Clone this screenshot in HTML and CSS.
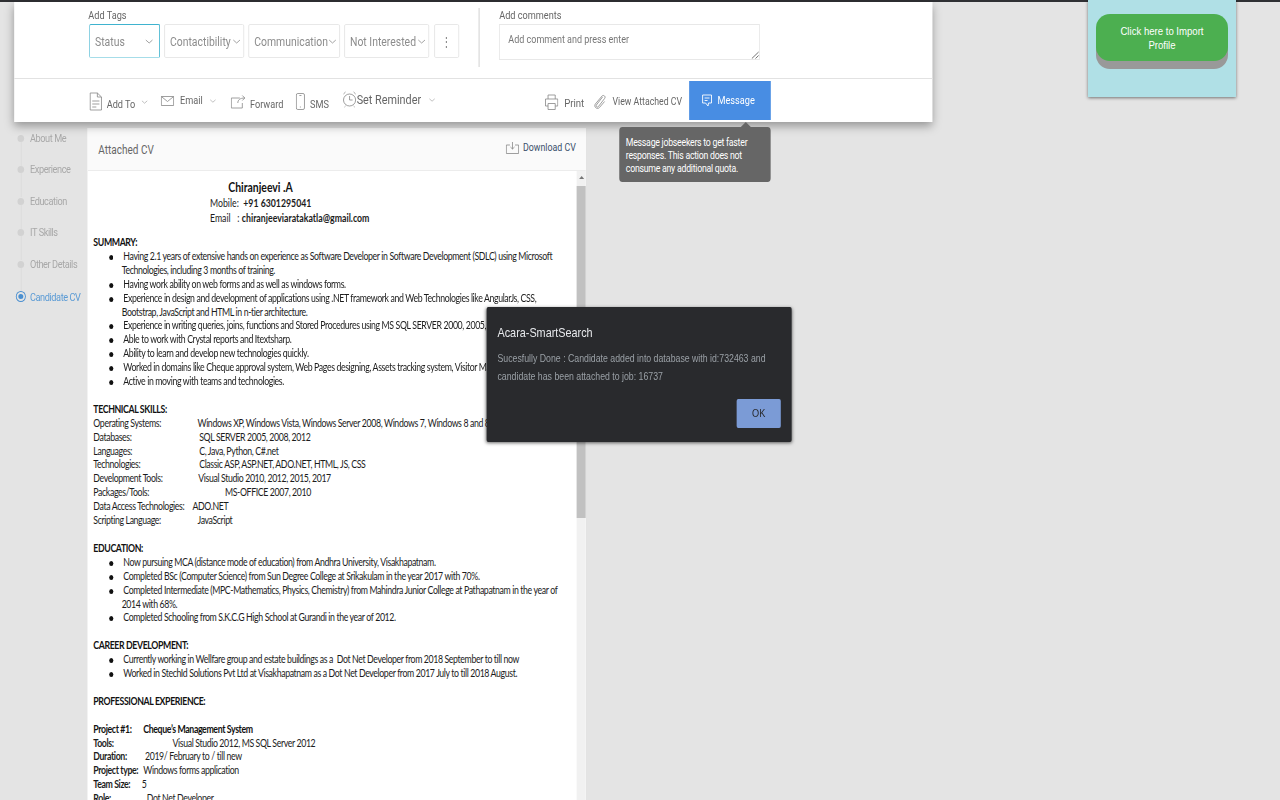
FILE: index.html
```html
<!DOCTYPE html>
<html lang="en">
<head>
    <meta charset="UTF-8">
    <title>Attached CV</title>
    <link rel="stylesheet" href="styles.css">
</head>
<body>
<div class="top-line"></div>

<div class="import-panel">
    <div class="import-btn"><span class="import-label">Click here to Import Profile</span></div>
</div>

<div class="stage">
    <div class="action-card">
        <div class="tags-row">
            <div class="tags-block">
                <div class="field-label tags-label">Add Tags</div>
                <div class="tag-selects">
                    <div class="tag-select status">Status <svg class="chev" viewBox="0 0 10 5"><path d="M1 1l4 3 4-3"/></svg></div>
                    <div class="tag-select contact">Contactibility <svg class="chev" viewBox="0 0 10 5"><path d="M1 1l4 3 4-3"/></svg></div>
                    <div class="tag-select comm">Communication <svg class="chev" viewBox="0 0 10 5"><path d="M1 1l4 3 4-3"/></svg></div>
                    <div class="tag-select notint">Not Interested <svg class="chev" viewBox="0 0 10 5"><path d="M1 1l4 3 4-3"/></svg></div>
                    <div class="tag-select more">&#8942;</div>
                </div>
            </div>
            <div class="comments-block">
                <div class="field-label">Add comments</div>
                <div class="comment-box">Add comment and press enter
                    <svg class="grip" viewBox="0 0 8 8" preserveAspectRatio="none"><path d="M7.500 1L1 7.500M7.500 4.500L4.500 7.500"/></svg>
                </div>
            </div>
        </div>
        <div class="actions-row">
            <div class="actions-left">
                <div class="action add-to">
                    <svg class="ico" width="16" height="20" viewBox="0 0 13 20" preserveAspectRatio="none"><path d="M1 1h7l4 4v13H1zM8 1v4h4M3 9h7M3 12h7M3 15h4"/></svg>
                    <span>Add To</span>
                    <svg class="chev" viewBox="0 0 10 5"><path d="M1 1l4 3 4-3"/></svg>
                </div>
                <div class="action email">
                    <svg class="ico" width="16" height="10" viewBox="0 0 13 10" preserveAspectRatio="none"><path d="M.5.5h12v9H.5zM.5.5l6 5 6-5"/></svg>
                    <span>Email</span>
                    <svg class="chev" viewBox="0 0 10 5"><path d="M1 1l4 3 4-3"/></svg>
                </div>
                <div class="action forward">
                    <svg class="ico" width="18" height="14" viewBox="0 0 15 14" preserveAspectRatio="none"><path d="M9 3H.5v10h11V8M7 8c0-3 2-5 7-5M11.500.5L14 3l-2.500 2.500"/></svg>
                    <span>Forward</span>
                </div>
                <div class="action sms">
                    <svg class="ico" width="11" height="17" viewBox="0 0 9 17" preserveAspectRatio="none"><rect x=".5" y=".5" width="8" height="16" rx="1.500"/><path d="M3.500 2.500h2M4 14h1"/></svg>
                    <span>SMS</span>
                </div>
                <div class="action reminder">
                    <svg class="ico" width="17" height="17" viewBox="0 0 14 17" preserveAspectRatio="none"><circle cx="7" cy="9" r="6"/><path d="M7 5v4h3M1 3l2-2M13 3l-2-2M3 15l-1 1M11 15l1 1"/></svg>
                    <span>Set Reminder</span>
                    <svg class="chev" viewBox="0 0 10 5"><path d="M1 1l4 3 4-3"/></svg>
                </div>
            </div>
            <div class="actions-right">
                <div class="action print">
                    <svg class="ico" width="16" height="16" viewBox="0 0 13 16" preserveAspectRatio="none"><path d="M3 5V1h7v4M3 12H.5V5h12v7H10M3 9.500h7v6H3z"/></svg>
                    <span>Print</span>
                </div>
                <div class="action attach">
                    <svg class="ico" width="16" height="16" viewBox="0 0 13 16" preserveAspectRatio="none"><path d="M9 3L3 11c-1 1.500 1 3 2 1.500l6-8c1.500-2-1-4-2.500-2.500L2 10c-2 3 2 6 4 3.500l5-6"/></svg>
                    <span>View Attached CV</span>
                </div>
                <div class="message-btn">
                    <svg width="13" height="13" viewBox="0 0 11 13" preserveAspectRatio="none"><path d="M1 1h9v8H7l-.5 3L4 9H1zM3 4h5M3 6.500h3"/></svg>
                    <span>Message</span>
                </div>
            </div>
        </div>
    </div>

    <div class="page-body">
        <ul class="side-steps">
            <li class="step">About Me</li>
            <li class="step">Experience</li>
            <li class="step">Education</li>
            <li class="step">IT Skills</li>
            <li class="step">Other Details</li>
            <li class="step current">Candidate CV</li>
        </ul>

        <div class="cv-panel">
            <div class="cv-head">
                <span class="cv-title">Attached CV</span>
                <span class="cv-download">
                    <svg width="16" height="12" viewBox="0 0 13 12" preserveAspectRatio="none"><path d="M4 3H.5v8.500h12V3H9M6.500 0v7M4.500 5l2 2 2-2"/></svg>
                    Download CV
                </span>
            </div>
            <div class="cv-body">
                <div class="cv-doc">
                    <div class="cv-name">Chiranjeevi .A</div>
                    <div class="cv-contact">Mobile:&nbsp; <b>+91 6301295041</b></div>
                    <div class="cv-contact">Email &nbsp; : <b>chiranjeeviaratakatla@gmail.com</b></div>

                    <div class="cv-h first">SUMMARY:</div>
                    <div class="li">Having 2.1 years of extensive hands on experience as Software Developer in Software Development (SDLC) using Microsoft</div>
                    <div class="li-more">Technologies, including 3 months of training.</div>
                    <div class="li">Having work ability on web forms and as well as windows forms.</div>
                    <div class="li">Experience in design and development of applications using .NET framework and Web Technologies like AngularJs, CSS,</div>
                    <div class="li-more">Bootstrap, JavaScript and HTML in n-tier architecture.</div>
                    <div class="li">Experience in writing queries, joins, functions and Stored Procedures using MS SQL SERVER 2000, 2005, 2008.</div>
                    <div class="li">Able to work with Crystal reports and Itextsharp.</div>
                    <div class="li">Ability to learn and develop new technologies quickly.</div>
                    <div class="li">Worked in domains like Cheque approval system, Web Pages designing, Assets tracking system, Visitor Management.</div>
                    <div class="li">Active in moving with teams and technologies.</div>

                    <div class="cv-h">TECHNICAL SKILLS:</div>
                    <div class="kv"><span class="k k125">Operating Systems:</span>Windows XP, Windows Vista, Windows Server 2008, Windows 7, Windows 8 and 8.1</div>
                    <div class="kv"><span class="k k127">Databases:</span>SQL SERVER 2005, 2008, 2012</div>
                    <div class="kv"><span class="k k127">Languages:</span>C, Java, Python, C#.net</div>
                    <div class="kv"><span class="k k127">Technologies:</span>Classic ASP, ASP.NET, ADO.NET, HTML, JS, CSS</div>
                    <div class="kv"><span class="k k126">Development Tools:</span>Visual Studio 2010, 2012, 2015, 2017</div>
                    <div class="kv"><span class="k k158">Packages/Tools:</span>MS-OFFICE 2007, 2010</div>
                    <div class="kv"><span class="k k119">Data Access Technologies:</span>ADO.NET</div>
                    <div class="kv"><span class="k k125">Scripting Language:</span>JavaScript</div>

                    <div class="cv-h">EDUCATION:</div>
                    <div class="li">Now pursuing MCA (distance mode of education) from Andhra University, Visakhapatnam.</div>
                    <div class="li">Completed BSc (Computer Science) from Sun Degree College at Srikakulam in the year 2017 with 70%.</div>
                    <div class="li">Completed Intermediate (MPC-Mathematics, Physics, Chemistry) from Mahindra Junior College at Pathapatnam in the year of</div>
                    <div class="li-more">2014 with 68%.</div>
                    <div class="li">Completed Schooling from S.K.C.G High School at Gurandi in the year of 2012.</div>

                    <div class="cv-h">CAREER DEVELOPMENT:</div>
                    <div class="li">Currently working in Wellfare group and estate buildings as a&nbsp; Dot Net Developer from 2018 September to till now</div>
                    <div class="li">Worked in StechId Solutions Pvt Ltd at Visakhapatnam as a Dot Net Developer from 2017 July to till 2018 August.</div>

                    <div class="cv-h">PROFESSIONAL EXPERIENCE:</div>

                    <div class="cv-h"><span class="k k60">Project #1:</span>Cheque’s Management System</div>
                    <div class="kv"><b class="k k95">Tools:</b>Visual Studio 2012, MS SQL Server 2012</div>
                    <div class="kv"><b class="k k62">Duration:</b>2019/ February to / till new</div>
                    <div class="kv"><b class="k k60">Project type:</b>Windows forms application</div>
                    <div class="kv"><b class="k k58">Team Size:</b>5</div>
                    <div class="kv"><b class="k k64">Role:</b>Dot Net Developer</div>
                </div>
                <div class="cv-scroll">
                    <div class="scroll-up"></div>
                    <div class="scroll-thumb"></div>
                </div>
            </div>
        </div>
    </div>

    <div class="msg-tooltip">Message jobseekers to get faster responses. This action does not consume any additional quota.</div>

    <div class="alert-box">
        <div class="alert-title">Acara-SmartSearch</div>
        <div class="alert-text">Sucesfully Done : Candidate added into database with id:732463 and candidate has been attached to job: 16737</div>
        <div class="alert-foot"><div class="alert-ok">OK</div></div>
    </div>
</div>
</body>
</html>
```

FILE: styles.css
```css
html, body {
    margin: 0;
    padding: 0;
    height: 800px;
    overflow: hidden;
    background: #e4e4e4;
}
body {
    position: relative;
}
.top-line {
    height: 2px;
    background: #2f3033;
}
/* the page was captured squeezed sideways, so x values in here are 1.2x the window's */
.stage {
    position: relative;
    width: 1280px;
    height: 798px;
    transform: scaleX(0.8333);
    transform-origin: 0 0;
    font-family: Roboto, "Liberation Sans", sans-serif;
    font-size: 11px;
    color: #666;
}

/* top card */
.action-card {
    position: relative;
    z-index: 2;
    width: 1102px;
    height: 120px;
    margin-left: 17px;
    background: #fff;
    box-shadow: 0 4px 10px rgba(0, 0, 0, 0.35);
}
.tags-row {
    display: flex;
    height: 76px;
    padding-left: 90px;
    border-bottom: 1px solid #e2e2e2;
}
.tags-block {
    width: 469px;
    height: 59px;
    margin-top: 6px;
    padding-top: 1px;
    box-sizing: border-box;
    border-right: 2px solid #e4e4e4;
}
.field-label {
    font-size: 11px;
    line-height: 14px;
    color: #666;
}
.tags-label {
    margin-left: -1px;
}
.tag-selects {
    display: flex;
    gap: 5px;
    margin-top: 1px;
}
.tag-select {
    display: flex;
    align-items: center;
    justify-content: space-between;
    height: 34px;
    box-sizing: border-box;
    padding: 0 3px 0 6px;
    border: 1px solid #e6e6e6;
    border-radius: 2px;
    font-size: 12.500px;
    color: #8c8c8c;
    white-space: nowrap;
}
.tag-select.status {
    width: 85px;
    padding-right: 7px;
    border-color: #3fb3cf;
    border-bottom-color: #a6dde9;
}
.tag-select.contact { width: 96px; }
.tag-select.comm { width: 110px; }
.tag-select.notint { width: 102px; }
.tag-select.more {
    width: 30px;
    margin-left: 1px;
    justify-content: center;
    padding: 0;
}
.chev {
    flex: none;
    width: 10px;
    height: 5px;
    fill: none;
    stroke: #999;
    stroke-width: 1;
}
.comments-block {
    margin: 7px 0 0 23px;
}
.comment-box {
    position: relative;
    width: 313px;
    height: 36px;
    margin-top: 1px;
    padding: 8px 10px;
    box-sizing: border-box;
    border: 1px solid #e8e8e8;
    font-size: 10.800px;
    color: #777;
}
.grip {
    position: absolute;
    right: 0;
    bottom: 0;
    width: 10px;
    height: 8px;
    fill: none;
    stroke: #555;
    stroke-width: 0.8;
}
.actions-row {
    display: flex;
    justify-content: space-between;
    height: 43px;
    padding: 2px 194px 0 90px;
    box-sizing: border-box;
}
.actions-left,
.actions-right {
    display: flex;
    align-items: stretch;
}
.action {
    display: flex;
    align-items: center;
    white-space: nowrap;
}
.ico {
    flex: none;
    fill: none;
    stroke: #888;
    stroke-width: 0.8;
}
.action .chev {
    width: 9px;
    height: 4px;
    stroke: #aaa;
}
.add-to { width: 86px; }
.add-to span { margin: 6px 7px 0 5px; }
.email { width: 84px; padding-bottom: 2px; box-sizing: border-box; }
.email span { margin: 0 8px 0 7px; }
.forward { width: 78px; }
.forward span { margin: 6px 0 0 5px; }
.sms { width: 56px; }
.sms span { margin: 6px 0 0 6px; }
.reminder { padding-bottom: 4px; box-sizing: border-box; font-size: 13px; }
.reminder span { margin: 0 9px 0 0; }
.print { width: 58px; font-size: 11.500px; }
.print span { margin: 2px 0 0 7px; }
.attach { width: 115px; font-size: 10.500px; }
.attach span { margin-left: 7px; }
.message-btn {
    display: flex;
    align-items: center;
    gap: 6px;
    width: 98px;
    height: 39px;
    padding-left: 15px;
    box-sizing: border-box;
    background: #488de3;
    color: #fff;
    font-size: 11px;
}
.message-btn svg {
    fill: none;
    stroke: #fff;
    stroke-width: 0.9;
}

/* sidebar + cv */
.page-body {
    display: flex;
    align-items: flex-start;
    padding-top: 6px;
}
.side-steps {
    flex: none;
    width: 105px;
    margin: 0;
    padding: 6px 0 0;
    list-style: none;
    font-size: 11px;
    letter-spacing: -0.5px;
    color: #a8a8a8;
}
.step {
    position: relative;
    height: 31.400px;
    padding-left: 36px;
    line-height: 10px;
    white-space: nowrap;
}
.step::before {
    content: "";
    position: absolute;
    left: 21px;
    top: 1px;
    width: 8px;
    height: 7px;
    border-radius: 50%;
    background: #d2d2d2;
}
.step::after {
    content: "";
    position: absolute;
    left: 25px;
    top: 8px;
    width: 1px;
    height: 24px;
    background: #dcdcdc;
}
.step.current {
    color: #5b9bd5;
    line-height: 14px;
}
.step.current::before {
    left: 20px;
    top: 1px;
    width: 6px;
    height: 5px;
    background: #4a8fd0;
    border: 2px solid #e4e4e4;
    box-shadow: 0 0 0 1px #4a8fd0;
}
.step.current::after {
    display: none;
}
.cv-panel {
    flex: none;
    width: 599px;
    height: 672px;
    box-sizing: border-box;
    border-right: 1px solid #d8d8d8;
    background: #fff;
    overflow: hidden;
}
.cv-head {
    display: flex;
    justify-content: space-between;
    align-items: center;
    height: 43px;
    padding: 0 12px 0 13px;
    box-sizing: border-box;
    background: #fafafa;
    border-bottom: 1px solid #ececec;
}
.cv-title {
    margin-top: 1px;
    font-size: 12px;
    color: #666;
}
.cv-download {
    display: flex;
    align-items: center;
    gap: 5px;
    margin-top: -3px;
    font-size: 10.600px;
    color: #3a506b;
}
.cv-download svg {
    fill: none;
    stroke: #888;
    stroke-width: 0.8;
}
.cv-body {
    display: flex;
    height: 629px;
}
.cv-doc {
    flex: 1;
    padding: 9px 0 0 7px;
    overflow: hidden;
    font-family: Lato, "Liberation Sans", sans-serif;
    font-size: 10.500px;
    line-height: 13.900px;
    letter-spacing: -0.45px;
    color: #1c1c1c;
    white-space: nowrap;
}
.cv-name {
    padding-left: 162px;
    font-size: 12.500px;
    font-weight: 700;
    line-height: 16px;
    letter-spacing: 0;
    color: #111;
}
.cv-contact {
    padding-left: 140px;
    font-size: 10.500px;
    line-height: 15px;
    letter-spacing: 0;
}
.cv-h {
    margin-top: 13.900px;
    font-weight: 700;
    color: #111;
}
.cv-h.first {
    margin-top: 10px;
}
.li {
    position: relative;
    padding-left: 36px;
}
.li::before {
    content: "";
    position: absolute;
    left: 19px;
    top: 5px;
    width: 5px;
    height: 5px;
    border-radius: 50%;
    background: #111;
}
.li-more {
    padding-left: 34px;
}
.k {
    display: inline-block;
}
.k125 { width: 125px; }
.k127 { width: 127px; }
.k126 { width: 126px; }
.k158 { width: 158px; }
.k119 { width: 119px; }
.k95 { width: 95px; }
.k62 { width: 62px; }
.k60 { width: 60px; }
.k58 { width: 58px; }
.k64 { width: 64px; }
.cv-scroll {
    flex: none;
    width: 11px;
    background: #f1f1f1;
}
.scroll-up {
    width: 0;
    height: 0;
    margin: 5px auto 0;
    border: 3px solid transparent;
    border-bottom: 3px solid #777;
    border-top: 0;
}
.scroll-thumb {
    height: 332px;
    margin-top: 7px;
    background: #c1c1c1;
}

/* overlays */
.msg-tooltip {
    position: absolute;
    z-index: 3;
    left: 743px;
    top: 125px;
    width: 182px;
    height: 55px;
    padding: 10px 8px 0;
    box-sizing: border-box;
    background: #666;
    border-radius: 4px;
    font-size: 10.500px;
    line-height: 12.800px;
    letter-spacing: -0.3px;
    color: #fff;
}
.msg-tooltip::before {
    content: "";
    position: absolute;
    left: 146px;
    top: -5px;
    border: 6px solid transparent;
    border-top: 0;
    border-bottom: 5px solid #666;
}
.import-panel {
    position: absolute;
    z-index: 3;
    left: 1088px;
    top: 0;
    width: 148px;
    height: 97px;
    padding: 14px 8px 0;
    box-sizing: border-box;
    background: #b0e0e6;
    box-shadow: 0 1px 3px rgba(0, 0, 0, 0.5);
}
.import-btn {
    height: 47px;
    padding-top: 10px;
    box-sizing: border-box;
    background: #4caf50;
    border-radius: 14px;
    box-shadow: 0 8px 0 #999;
}
.import-label {
    display: block;
    width: 120%;
    padding: 0 17px;
    box-sizing: border-box;
    transform: scaleX(0.8333);
    transform-origin: 0 0;
    font-family: "Liberation Sans", Arial, sans-serif;
    font-size: 11.500px;
    line-height: 14px;
    text-align: center;
    color: #fff;
}
.alert-box {
    position: absolute;
    z-index: 4;
    left: 584px;
    top: 305px;
    width: 366px;
    height: 135px;
    padding: 18px 13px 0;
    box-sizing: border-box;
    background: #292a2d;
    border-radius: 2px;
    box-shadow: 0 1px 4px rgba(0, 0, 0, 0.6);
    font-family: "Liberation Sans", Arial, sans-serif;
}
.alert-title {
    font-size: 13px;
    line-height: 15px;
    color: #e8eaed;
}
.alert-text {
    margin-top: 9px;
    font-size: 10.500px;
    line-height: 18px;
    color: #9aa0a6;
}
.alert-foot {
    display: flex;
    justify-content: flex-end;
    margin-top: 14px;
}
.alert-ok {
    width: 53px;
    height: 29px;
    background: #7b9bd6;
    border-radius: 2px;
    font-size: 11px;
    line-height: 29px;
    text-align: center;
    color: #292a2d;
}
```
